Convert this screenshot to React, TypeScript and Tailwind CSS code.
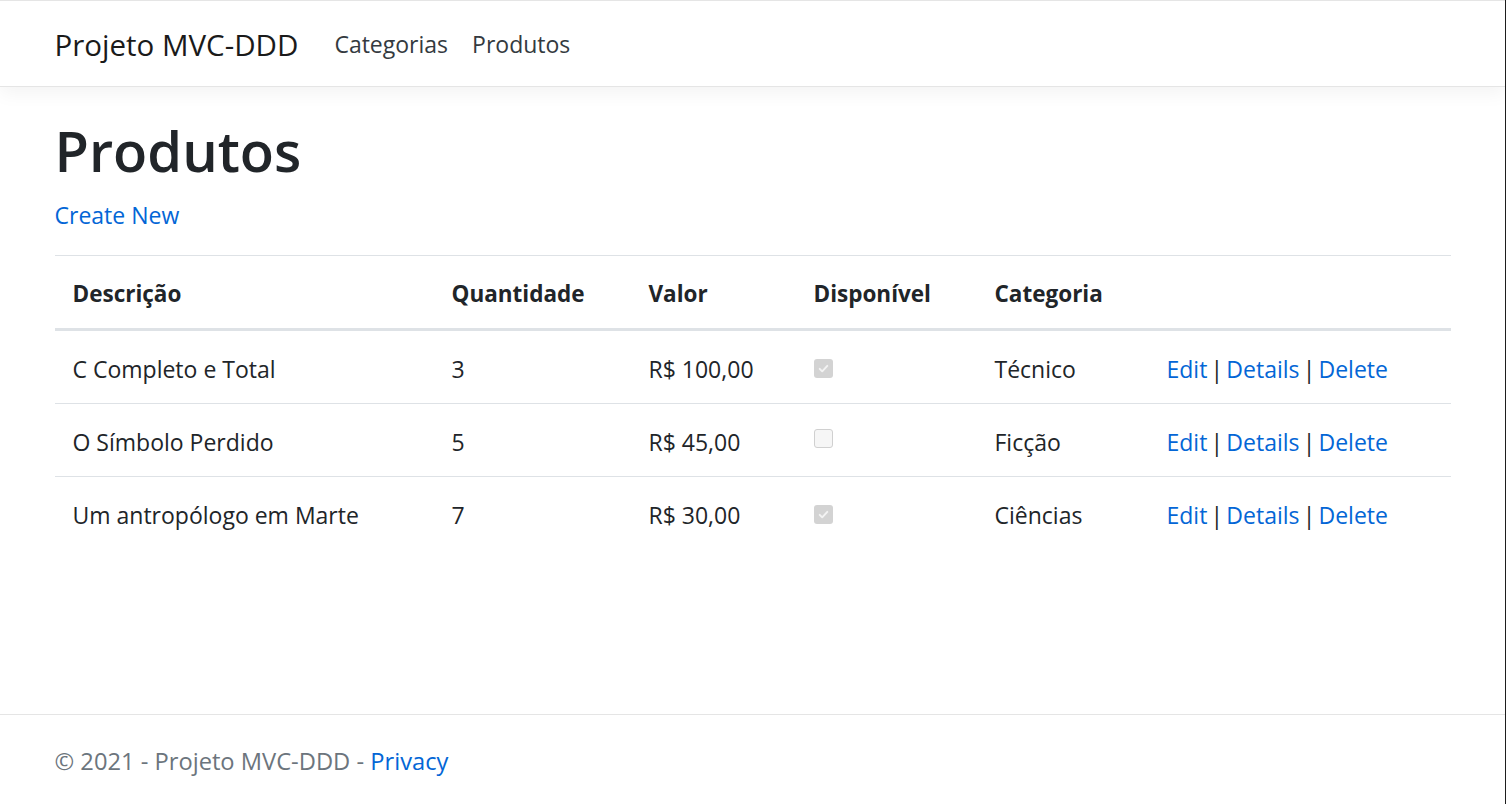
const produtos = [
  { descricao: 'C Completo e Total', quantidade: 3, valor: 'R$ 100,00', disponivel: true, categoria: 'Técnico' },
  { descricao: 'O Símbolo Perdido', quantidade: 5, valor: 'R$ 45,00', disponivel: false, categoria: 'Ficção' },
  { descricao: 'Um antropólogo em Marte', quantidade: 7, valor: 'R$ 30,00', disponivel: true, categoria: 'Ciências' },
];

const Checkbox = ({ checked }: { checked: boolean }) =>
  checked ? (
    <span className="inline-flex items-center justify-center w-[19px] h-[19px] rounded-[3px] bg-[#d3d3d3] align-middle">
      <svg width="13" height="13" viewBox="0 0 12 12" fill="none">
        <path d="M2.5 6.3l2.3 2.3 4.7-5" stroke="#f3f3f3" strokeWidth="1.8" strokeLinecap="round" strokeLinejoin="round" />
      </svg>
    </span>
  ) : (
    <span className="inline-block w-[19px] h-[19px] rounded-[3px] border border-[#d0d0d0] bg-[#f6f6f6] align-middle" />
  );

const Sep = () => <span className="inline-block w-[19px] text-center text-[#212529]">|</span>;

const App = () => {
  return (
    <div className="h-[804px] flex flex-col bg-white border-r border-[#1e1e1e] text-[23px] leading-[36px] text-[#212529] font-['Open_Sans',sans-serif] overflow-hidden">
      {/* Navbar */}
      <nav className="border-t border-b border-[#e5e5e5] bg-white shadow-[0_6px_18px_rgba(0,0,0,0.05)] mb-[24px]">
        <div className="mx-auto w-[1440px] px-[22px] pt-[13px] pb-[12px] flex items-center">
          <a className="py-[7px] mr-[24px] text-[29.5px] leading-[45px] text-[#1a1a1a] whitespace-nowrap">Projeto MVC-DDD</a>
          <ul className="flex">
            <li><a className="block px-[12px] py-[12px] text-[#343a40]">Categorias</a></li>
            <li><a className="block px-[12px] py-[12px] text-[#343a40]">Produtos</a></li>
          </ul>
        </div>
      </nav>

      {/* Conteúdo */}
      <main className="mx-auto w-[1440px] px-[22px]">
        <h1 className="pt-[3px] text-[56px] font-semibold leading-[72px] mb-[9px]">Produtos</h1>
        <p className="pt-[2px] mb-[22px]">
          <a className="text-[#0366d6]">Create New</a>
        </p>

        <table className="w-full border-collapse table-fixed">
          <colgroup>
            <col className="w-[379px]" />
            <col className="w-[197px]" />
            <col className="w-[165px]" />
            <col className="w-[181px]" />
            <col className="w-[172px]" />
            <col />
          </colgroup>
          <thead>
            <tr className="text-left text-[22.5px]">
              <th className="px-[18px] pt-[20px] pb-[16px] font-bold border-t border-b-[3px] border-[#dee2e6]">Descrição</th>
              <th className="px-[18px] pt-[20px] pb-[16px] font-bold border-t border-b-[3px] border-[#dee2e6]">Quantidade</th>
              <th className="px-[18px] pt-[20px] pb-[16px] font-bold border-t border-b-[3px] border-[#dee2e6]">Valor</th>
              <th className="px-[18px] pt-[20px] pb-[16px] font-bold border-t border-b-[3px] border-[#dee2e6]">Disponível</th>
              <th className="px-[18px] pt-[20px] pb-[16px] font-bold border-t border-b-[3px] border-[#dee2e6]">Categoria</th>
              <th className="px-[18px] pt-[20px] pb-[16px] border-t border-b-[3px] border-[#dee2e6]"></th>
            </tr>
          </thead>
          <tbody>
            {produtos.map((p, i) => (
              <tr key={p.descricao} className={i > 0 ? 'border-t border-[#dee2e6]' : ''}>
                <td className="px-[18px] pt-[20px] pb-[16px] whitespace-nowrap">{p.descricao}</td>
                <td className="px-[18px] pt-[20px] pb-[16px]">{p.quantidade}</td>
                <td className="px-[18px] pt-[20px] pb-[16px] whitespace-nowrap">{p.valor}</td>
                <td className="px-[18px] pt-[20px] pb-[16px]">
                  <span className="inline-flex -translate-y-[3px]">
                    <Checkbox checked={p.disponivel} />
                  </span>
                </td>
                <td className="px-[18px] pt-[20px] pb-[16px]">{p.categoria}</td>
                <td className="px-[18px] pt-[20px] pb-[16px] whitespace-nowrap">
                  <a className="text-[#0366d6]">Edit</a>
                  <Sep />
                  <a className="text-[#0366d6]">Details</a>
                  <Sep />
                  <a className="text-[#0366d6]">Delete</a>
                </td>
              </tr>
            ))}
          </tbody>
        </table>
      </main>

      {/* Rodapé */}
      <footer className="mt-auto border-t border-[#e5e5e5] text-[#6c757d] text-[23.7px] pt-[3px] leading-[86px] whitespace-nowrap">
        <div className="mx-auto w-[1440px] px-[22px]">
          © 2021 - Projeto MVC-DDD - <a className="text-[#0366d6]">Privacy</a>
        </div>
      </footer>
    </div>
  );
};

export default App;
